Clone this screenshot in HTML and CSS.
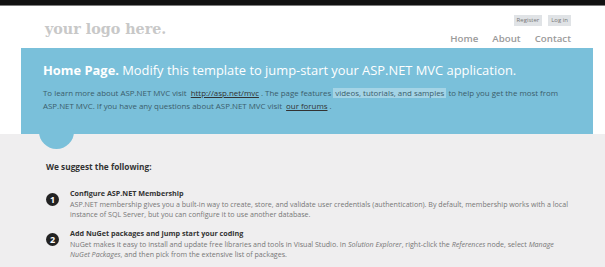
FILE: index.html
```html
<!DOCTYPE html>
<html lang="en">
<head>
    <meta charset="UTF-8">
    <title>Home Page - My ASP.NET MVC Application</title>
    <link rel="stylesheet" href="styles.css">
</head>
<body>
    <div class="topbar"></div>
    <header class="header">
        <div class="logo">your logo here.</div>
        <div class="headRight">
            <div class="login">
                <a>Register</a>
                <a>Log in</a>
            </div>
            <nav class="menu">
                <a>Home</a>
                <a>About</a>
                <a>Contact</a>
            </nav>
        </div>
    </header>

    <div class="featuredWrap">
        <section class="featured">
            <h1><b>Home Page.</b> Modify this template to jump-start your ASP.NET MVC application.</h1>
            <p>
                To learn more about ASP.NET MVC visit <a class="link">http://asp.net/mvc</a> . The page features
                <span class="mark">videos, tutorials, and samples</span> to help you get the most from
                ASP.NET MVC. If you have any questions about ASP.NET MVC visit <a class="link">our forums</a> .
            </p>
        </section>
    </div>

    <main class="main">
        <h3>We suggest the following:</h3>
        <ol class="steps">
            <li>
                <span class="num">1</span>
                <div class="stepText">
                    <h5>Configure ASP.NET Membership</h5>
                    <p>ASP.NET membership gives you a built-in way to create, store, and validate user credentials (authentication). By default, membership works with a local instance of SQL Server, but you can configure it to use another database.</p>
                </div>
            </li>
            <li>
                <span class="num">2</span>
                <div class="stepText">
                    <h5>Add NuGet packages and jump start your coding</h5>
                    <p>NuGet makes it easy to install and update free libraries and tools in Visual Studio. In <i>Solution Explorer</i>, right-click the <i>References</i> node, select <i>Manage NuGet Packages</i>, and then pick from the extensive list of packages.</p>
                </div>
            </li>
        </ol>
    </main>
</body>
</html>
```

FILE: styles.css
```css
* {
    margin: 0;
    padding: 0;
}

body {
    font-family: "Open Sans", "Noto Sans", sans-serif;
    background: #efeeef;
    color: #333;
    overflow: hidden;
}

a {
    text-decoration: none;
    cursor: pointer;
}

.topbar {
    height: 5px;
    background: #111;
    border-bottom: 1px solid #7d7d7d;
}

.header {
    background: #fff;
    height: 42px;
    display: flex;
    justify-content: space-between;
    padding: 0 34px 0 45px;
}
.logo {
    font-family: "DejaVu Serif", serif;
    font-weight: bold;
    font-size: 14.3px;
    color: #c8c8c8;
    margin-top: 15px;
}
.headRight {
    display: flex;
    flex-direction: column;
    align-items: flex-end;
}
.login {
    display: flex;
    gap: 6px;
    margin-top: 9px;
}
.login a {
    background: #e0e3e6;
    color: #777;
    font-size: 6px;
    line-height: 11px;
    padding: 0 3px;
}
.menu {
    display: flex;
    gap: 14px;
    margin-top: 6px;
}
.menu a {
    color: #9a9a9a;
    font-size: 9.7px;
    font-weight: 600;
}

.featuredWrap {
    background: #fff;
    padding: 0 12px 0 21px;
}
.featured {
    position: relative;
    background: #7ac0da;
    padding: 13px 0 0 22px;
    height: 73px;
}
.featured::after {
    content: "";
    position: absolute;
    left: 18px;
    bottom: -15px;
    width: 35px;
    height: 35px;
    border-radius: 50%;
    background: #7ac0da;
}
.featured h1 {
    color: #fff;
    font-size: 12.9px;
    font-weight: 400;
    line-height: 18px;
}
.featured h1 b {
    font-weight: 700;
}
.featured p {
    margin-top: 8px;
    font-size: 7.9px;
    line-height: 13px;
    color: #3b5d6b;
    width: 522px;
}
.featured .link {
    color: #333;
    text-decoration: underline;
    margin-left: 2px;
}
.featured .mark {
    background: #a4d4e6;
    padding: 0 2px;
}

.main {
    background: #efeeef;
    padding: 27px 0 0 46px;
}
.main h3 {
    font-size: 8.3px;
    font-weight: 700;
    color: #333;
}
.steps {
    list-style: none;
    margin-top: 16px;
}
.steps li {
    display: flex;
    gap: 11px;
    margin-bottom: 9px;
}
.num {
    flex: none;
    width: 13px;
    height: 13px;
    border-radius: 50%;
    background: #222;
    color: #fff;
    font-size: 9px;
    font-weight: 700;
    line-height: 13px;
    text-align: center;
    margin-top: 5px;
}
.stepText h5 {
    font-size: 7.2px;
    font-weight: 700;
    color: #333;
    line-height: 11px;
}
.stepText p {
    font-size: 7.1px;
    line-height: 10px;
    color: #777;
    width: 500px;
}
```
